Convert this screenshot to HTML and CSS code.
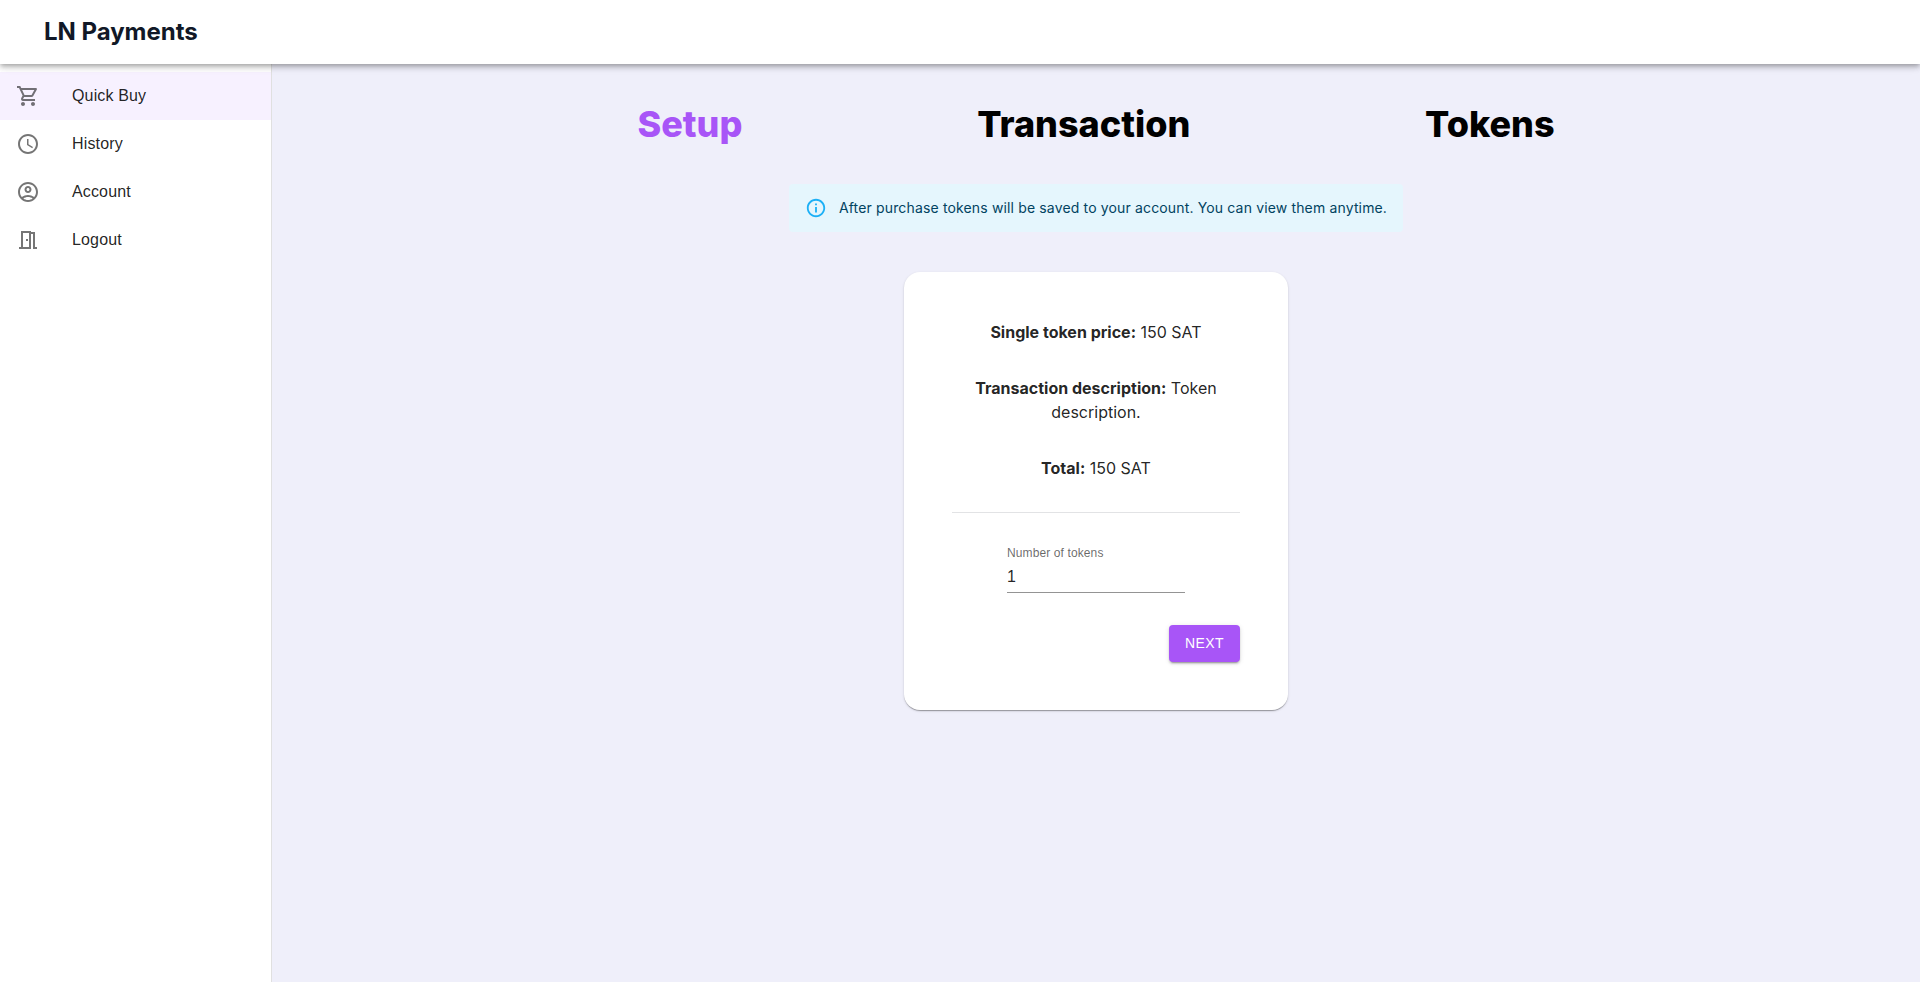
FILE: index.html
```html
<!DOCTYPE html>
<html lang="en">
<head>
<meta charset="utf-8">
<title>LN Payments</title>
<link rel="stylesheet" href="styles.css">
</head>
<body>
<header class="header"><h1 class="brand">LN Payments</h1></header>
<div class="layout">
  <nav class="sidebar">
    <a class="nav-item active"><svg class="nav-icon" viewBox="0 0 24 24"><path d="M15.55 13c.75 0 1.41-.41 1.75-1.03l3.58-6.49c.37-.66-.11-1.48-.87-1.48H5.21l-.94-2H1v2h2l3.6 7.59-1.35 2.44C4.52 15.37 5.48 17 7 17h12v-2H7l1.1-2h7.45zM6.16 6h12.15l-2.76 5H8.53L6.16 6zM7 18c-1.1 0-1.99.9-1.99 2S5.9 22 7 22s2-.9 2-2-.9-2-2-2zm10 0c-1.1 0-1.99.9-1.99 2s.89 2 1.99 2 2-.9 2-2-.9-2-2-2z"/></svg><span>Quick Buy</span></a>
    <a class="nav-item"><svg class="nav-icon" viewBox="0 0 24 24"><path d="M11.99 2C6.47 2 2 6.48 2 12s4.47 10 9.99 10C17.52 22 22 17.52 22 12S17.52 2 11.99 2zM12 20c-4.42 0-8-3.58-8-8s3.58-8 8-8 8 3.58 8 8-3.58 8-8 8zm.5-13H11v6l5.25 3.15.75-1.23-4.5-2.67z"/></svg><span>History</span></a>
    <a class="nav-item"><svg class="nav-icon" viewBox="0 0 24 24"><path d="M12 2C6.48 2 2 6.48 2 12s4.48 10 10 10 10-4.48 10-10S17.52 2 12 2zM7.35 18.5C8.66 17.56 10.26 17 12 17s3.34.56 4.65 1.5C15.34 19.44 13.74 20 12 20s-3.34-.56-4.65-1.5zm10.79-1.38C16.45 15.8 14.32 15 12 15s-4.45.8-6.14 2.12C4.7 15.73 4 13.95 4 12c0-4.42 3.58-8 8-8s8 3.58 8 8c0 1.95-.7 3.73-1.86 5.12zM12 6c-1.93 0-3.5 1.57-3.5 3.5S10.07 13 12 13s3.5-1.57 3.5-3.5S13.93 6 12 6zm0 5c-.83 0-1.5-.67-1.5-1.5S11.17 8 12 8s1.5.67 1.5 1.5S12.83 11 12 11z"/></svg><span>Account</span></a>
    <a class="nav-item"><svg class="nav-icon" viewBox="0 0 24 24"><path d="M19 19V4h-4V3H5v16H3v2h12V6h2v15h4v-2h-2zm-6 0H7V5h6v14zm-3-8h2v2h-2z"/></svg><span>Logout</span></a>
  </nav>
  <main class="main">
    <div class="steps">
      <span class="step current">Setup</span>
      <span class="step">Transaction</span>
      <span class="step">Tokens</span>
    </div>
    <div class="alert">
      <svg class="alert-icon" viewBox="0 0 24 24"><path d="M11 7h2v2h-2V7zm0 4h2v6h-2v-6zm1-9C6.48 2 2 6.48 2 12s4.48 10 10 10 10-4.48 10-10S17.52 2 12 2zm0 18c-4.41 0-8-3.59-8-8s3.59-8 8-8 8 3.59 8 8-3.59 8-8 8z"/></svg>
      <span class="alert-text">After purchase tokens will be saved to your account. You can view them anytime.</span>
    </div>
    <section class="card">
      <div class="details">
        <p><strong>Single token price:</strong> 150 SAT</p>
        <p><strong>Transaction description:</strong> Token description.</p>
        <p><strong>Total:</strong> 150 SAT</p>
      </div>
      <hr class="divider">
      <div class="field">
        <label class="field-label" for="tokens">Number of tokens</label>
        <input class="field-input" id="tokens" type="text" value="1">
      </div>
      <button class="next">Next</button>
    </section>
  </main>
</div>
</body>
</html>
```
FILE: styles.css
```css
* { box-sizing: border-box; }
body {
  margin: 0;
  height: 100vh;
  display: flex;
  flex-direction: column;
  overflow: hidden;
  font-family: Inter, sans-serif;
  font-size: 16px;
  line-height: 24px;
  background: #efeffa;
  color: rgba(0, 0, 0, .87);
}
.header {
  position: relative;
  z-index: 1;
  height: 64px;
  flex: none;
  display: flex;
  align-items: center;
  padding: 0 44px;
  background: #fff;
  box-shadow: 0 2px 4px -1px rgba(0,0,0,.2), 0 4px 5px 0 rgba(0,0,0,.14), 0 1px 10px 0 rgba(0,0,0,.12);
}
.brand { margin: 0; font-size: 24px; line-height: 32px; font-weight: 700; letter-spacing: -.03px; color: #111827; }
.layout { flex: 1; display: flex; }
.sidebar {
  width: 272px;
  flex: none;
  padding-top: 8px;
  background: #fff;
  border-right: 1px solid rgba(0,0,0,.12);
}
.nav-item {
  height: 48px;
  display: flex;
  align-items: center;
  gap: 32px;
  padding: 0 16px;
  font-family: "Liberation Sans", Arial, sans-serif;
  letter-spacing: .00938em;
}
.nav-item.active { background: #f7f1ff; }
.nav-icon { width: 24px; height: 24px; fill: rgba(0,0,0,.54); }
.main {
  flex: 1;
  display: flex;
  flex-direction: column;
  align-items: center;
  gap: 40px;
  padding-top: 40px;
}
.steps {
  width: 1152px;
  display: flex;
  justify-content: space-around;
  font-size: 36px;
  line-height: 40px;
  font-weight: 800;
  color: #000;
}
.step.current { color: #a855f7; }
.alert {
  height: 48px;
  display: flex;
  align-items: center;
  gap: 12px;
  padding: 0 16px;
  border-radius: 4px;
  background: #e5f6fd;
  color: #014361;
  font-size: 14px;
  line-height: 20px;
  letter-spacing: .01071em;
}
.alert-icon { width: 22px; height: 22px; fill: #1cb0f6; }
.card {
  width: 384px;
  padding: 48px;
  display: flex;
  flex-direction: column;
  border-radius: 16px;
  background: #fff;
  box-shadow: 0 2px 1px -1px rgba(0,0,0,.2), 0 1px 1px 0 rgba(0,0,0,.14), 0 1px 3px 0 rgba(0,0,0,.12);
}
.details { display: flex; flex-direction: column; gap: 32px; text-align: center; }
.details p { margin: 0; }
.divider { width: 100%; margin: 32px 0 31px; border: 0; border-top: 1px solid #e2e3e5; }
.field {
  width: 178px;
  height: 49px;
  align-self: center;
  display: flex;
  flex-direction: column;
  border-bottom: 1px solid rgba(0,0,0,.42);
  font-family: "Liberation Sans", Arial, sans-serif;
}
.field-label {
  height: 17px;
  font-size: 16px;
  line-height: 23px;
  letter-spacing: .00938em;
  white-space: nowrap;
  color: rgba(0,0,0,.6);
  transform: scale(.75);
  transform-origin: top left;
}
.field-input {
  width: 100%;
  height: 31px;
  padding: 5px 0 4px;
  border: 0;
  background: none;
  color: rgba(0,0,0,.87);
  font: 16px "Liberation Sans", Arial, sans-serif;
}
.next {
  width: 71px;
  height: 37px;
  margin-top: 32px;
  padding: 0 0 1px;
  align-self: flex-end;
  border: 0;
  border-radius: 4px;
  background: #a855f7;
  color: #fff;
  font: 400 14px/24px "Liberation Sans", Arial, sans-serif;
  letter-spacing: .02857em;
  text-transform: uppercase;
  box-shadow: 0 3px 1px -2px rgba(0,0,0,.2), 0 2px 2px 0 rgba(0,0,0,.14), 0 1px 5px 0 rgba(0,0,0,.12);
}
```
